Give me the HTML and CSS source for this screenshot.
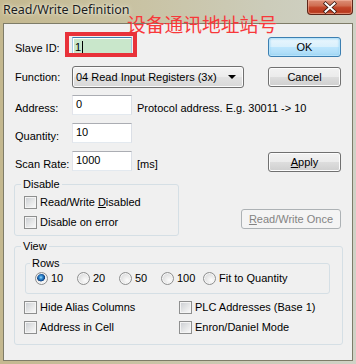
FILE: index.html
```html
<!DOCTYPE html>
<html>
<head>
<meta charset="utf-8">
<link rel="stylesheet" href="styles.css">
</head>
<body>
<div class="window">
  <div class="titlebar">
    <span class="title">Read/Write Definition</span>
    <div class="close">
      <svg width="46" height="15" viewBox="0 0 46 15">
        <path d="M18.5 3.5 L27.5 11.5 M27.5 3.5 L18.5 11.5" stroke="#3a1a12" stroke-width="3.6" stroke-linecap="square" fill="none"/>
        <path d="M18.5 3.5 L27.5 11.5 M27.5 3.5 L18.5 11.5" stroke="#ffffff" stroke-width="2" stroke-linecap="square" fill="none"/>
      </svg>
    </div>
  </div>
  <div class="client">
    <div class="row row-slave">
      <span class="lbl">Slave ID:</span>
      <div class="input slave"><div class="fill">1<span class="caret"></span></div></div>
      <button class="btn default">OK</button>
    </div>
    <div class="row row-func">
      <span class="lbl">Function:</span>
      <div class="select"><span>04 Read Input Registers (3x)</span><span class="arrow"></span></div>
      <button class="btn">Cancel</button>
    </div>
    <div class="row row-field">
      <span class="lbl low">Address:</span>
      <div class="input">0</div>
      <span class="note">Protocol address. E.g. 30011 -&gt; 10</span>
    </div>
    <div class="row row-field">
      <span class="lbl low">Quantity:</span>
      <div class="input">10</div>
    </div>
    <div class="row row-field">
      <span class="lbl low">Scan Rate:</span>
      <div class="input">1000</div>
      <span class="note">[ms]</span>
      <button class="btn"><u>A</u>pply</button>
    </div>
    <div class="row row-disable">
      <fieldset class="group disable">
        <legend>Disable</legend>
        <div class="check"><span class="cb"></span><span>Read/Write <u>D</u>isabled</span></div>
        <div class="check"><span class="cb"></span><span>Disable on error</span></div>
      </fieldset>
      <button class="btn disabled"><u>R</u>ead/Write Once</button>
    </div>
    <fieldset class="group view">
      <legend>View</legend>
      <fieldset class="group rows">
        <legend>Rows</legend>
        <div class="radios">
          <div class="radio-item"><span class="radio checked"></span><span>10</span></div>
          <div class="radio-item"><span class="radio"></span><span>20</span></div>
          <div class="radio-item"><span class="radio"></span><span>50</span></div>
          <div class="radio-item"><span class="radio"></span><span>100</span></div>
          <div class="radio-item"><span class="radio"></span><span>Fit to Quantity</span></div>
        </div>
      </fieldset>
      <div class="checks">
        <div class="check"><span class="cb"></span><span>Hide Alias Columns</span></div>
        <div class="check"><span class="cb"></span><span>PLC Addresses (Base 1)</span></div>
        <div class="check"><span class="cb"></span><span>Address in Cell</span></div>
        <div class="check"><span class="cb"></span><span>Enron/Daniel Mode</span></div>
      </div>
    </fieldset>
  </div>
  <div class="annot-text">设备通讯地址站号</div>
  <div class="annot-box"></div>
</div>
</body>
</html>
```
FILE: styles.css
```css
* { box-sizing: border-box; }
html, body { margin: 0; padding: 0; }
body {
  width: 356px;
  height: 364px;
  overflow: hidden;
  font-family: "Liberation Sans", Arial, sans-serif;
  font-size: 11px;
  line-height: 13px;
  color: #000;
  background: #c8c5a8;
}
.window {
  position: relative;
  width: 356px;
  height: 364px;
  background: linear-gradient(90deg, #c4b88f 0%, #c9c3a4 40%, #ccccba 75%, #d0d2c6 100%);
}
.titlebar {
  height: 23px;
  display: flex;
  align-items: flex-start;
  padding-left: 3px;
}
.title {
  font-family: "Noto Sans", "Open Sans", sans-serif;
  font-size: 12.5px;
  line-height: 16px;
  margin-top: 2px;
  color: #1c1c1c;
  text-shadow: 0 0 5px #efeede, 0 0 2px #efeede;
}
.close {
  margin-left: auto;
  margin-right: 3px;
  width: 46px;
  height: 15px;
  border: 1px solid #5e2619;
  border-top: none;
  border-radius: 0 0 4px 4px;
  background: linear-gradient(#dc9078 0%, #d06e52 40%, #c24528 55%, #b8391e 85%, #c85a3a 100%);
  box-shadow: inset 0 0 0 1px rgba(255, 200, 180, 0.45);
  display: flex;
  align-items: center;
  justify-content: center;
  overflow: hidden;
}
.close svg { display: block; flex: none; }
.client {
  margin: 0 3px;
  height: 338px;
  background: #f0f0f0;
  border: 1px solid #7e7c68;
  padding: 13px 11px 0 11px;
}
.row {
  display: flex;
  align-items: flex-start;
}
.lbl {
  width: 57px;
  flex: none;
  padding-top: 5px;
}
.lbl.low { padding-top: 7px; }
.row-slave { height: 20px; }
.row-func { margin-top: 9px; height: 22px; }
.row-func .btn { margin-top: 1px; }
.row-field { margin-top: 8px; height: 20px; }
.row-func + .row-field { margin-top: 7px; }
.row-field .btn { margin-top: 1px; }
.input {
  width: 60px;
  height: 20px;
  flex: none;
  background: #fff;
  border: 1px solid #e3e9ef;
  border-top-color: #abadb3;
  border-left-color: #e2e3ea;
  border-right-color: #dbdfe6;
  padding: 1px 3px;
  line-height: 14px;
}
.input.slave {
  border-color: #b7d9ed;
  border-top-color: #3d7bad;
  border-left-color: #a4c9e3;
  border-right-color: #a4c9e3;
  padding: 1px;
}
.fill {
  width: 57px;
  height: 15px;
  background: #c9e7cb;
  padding-left: 1px;
  line-height: 14px;
  display: flex;
  align-items: center;
}
.caret {
  display: inline-block;
  width: 1px;
  height: 12px;
  background: #000;
  margin-left: 1px;
}
.note { margin-left: 5px; padding-top: 7px; }
.select {
  width: 172px;
  height: 22px;
  flex: none;
  border: 1px solid #707070;
  border-radius: 3px;
  background: linear-gradient(#f4f4f4 0%, #ececec 50%, #e2e2e2 51%, #d8d8d8 100%);
  box-shadow: inset 0 0 0 1px #fbfbfb;
  display: flex;
  align-items: center;
  padding: 0 7px 0 3px;
}
.select span:first-child { flex: 1; }
.arrow {
  width: 0;
  height: 0;
  border-left: 4px solid transparent;
  border-right: 4px solid transparent;
  border-top: 4px solid #000;
}
.btn {
  margin: 0 0 0 auto;
  width: 73px;
  height: 20px;
  flex: none;
  padding: 0;
  font: inherit;
  color: #000;
  border: 1px solid #707070;
  border-radius: 3px;
  background: linear-gradient(#f2f2f2 0%, #ebebeb 50%, #dddddd 51%, #cfcfcf 100%);
  box-shadow: inset 0 0 0 1px #fcfcfc;
  text-align: center;
}
.btn.default {
  border-color: #3c7fb1;
  background: linear-gradient(#eaf6fd 0%, #d9f0fc 50%, #bee6fd 51%, #a7d9f5 100%);
  box-shadow: inset 0 0 0 1px #b8e3fa, inset 0 0 2px 1px #8fd0f3;
}
.btn.disabled {
  width: 100px;
  color: #838383;
  border-color: #adb2b5;
  background: #f4f4f4;
  box-shadow: none;
  align-self: flex-end;
  margin-bottom: 7px;
}
.group {
  margin: 0;
  padding: 0 0 0 9px;
  border: 1px solid #d5dfe5;
  border-radius: 3px;
  min-width: 0;
}
.group legend {
  padding: 0 2px;
  margin-left: -3px;
  line-height: 13px;
}
.row-disable { margin-top: 7px; }
.disable {
  margin-left: -1px;
  width: 165px;
  height: 58px;
  padding-top: 1px;
}
.check {
  display: flex;
  align-items: center;
  height: 20px;
}
.cb {
  width: 13px;
  height: 13px;
  flex: none;
  margin-right: 3px;
  border: 1px solid #8e8f8f;
  background: linear-gradient(135deg, #c9ccd1 0%, #e6e7e8 55%, #fbfbfb 100%);
  box-shadow: inset 0 0 0 1px #f4f4f4;
}
.view {
  margin: 4px 0 0 -1px;
  width: 329px;
  height: 105px;
}
.rows {
  margin: 4px 0 0 1px;
  width: 305px;
  height: 37px;
}
.rows legend { margin-left: -5px; }
.radios {
  display: flex;
  height: 16px;
  align-items: center;
}
.radio-item {
  display: flex;
  align-items: center;
  width: 42px;
  flex: none;
}
.radio-item:last-child { width: auto; }
.radio {
  width: 13px;
  height: 13px;
  flex: none;
  margin-right: 3px;
  border-radius: 50%;
  border: 1px solid #8e8f8f;
  background: radial-gradient(circle at 65% 65%, #fcfcfc 0%, #e8e8e8 45%, #cfd1d4 100%);
  box-shadow: inset 0 0 0 1px #f6f6f6;
}
.radio.checked {
  background:
    radial-gradient(circle at 45% 40%, #9fdcff 0, #3a95d6 1.5px, #1a5ea6 3px, #0f3f7a 3.8px, rgba(15,63,122,0) 4.3px),
    radial-gradient(circle at 65% 65%, #fcfcfc 0%, #e8e8e8 45%, #cfd1d4 100%);
}
.checks {
  margin-top: 3px;
  display: grid;
  grid-template-columns: 155px 1fr;
}
.annot-text {
  position: absolute;
  left: 127px;
  top: 12px;
  font-family: "Noto Sans CJK SC", sans-serif;
  font-size: 18.75px;
  line-height: 24px;
  color: #f8383a;
  white-space: nowrap;
}
.annot-box {
  position: absolute;
  left: 65px;
  top: 32px;
  width: 72px;
  height: 25px;
  border: 4px solid #e8323a;
}
```
